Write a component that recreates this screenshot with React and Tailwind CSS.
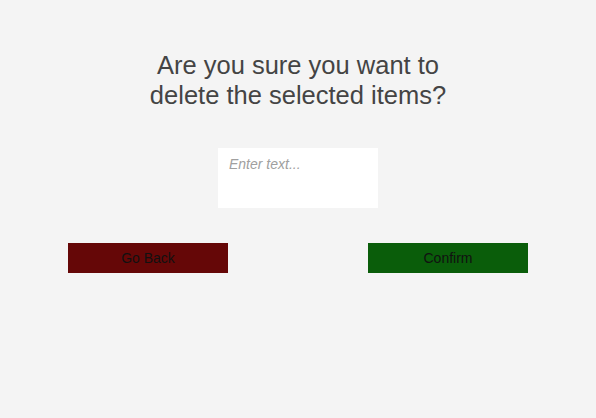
export default function App() {
  return (
    <div className="w-[596px] h-[418px] bg-[#f4f4f4] flex flex-col items-center" style={{ fontFamily: '"Liberation Sans", Arial, sans-serif' }}>
      <h1 className="mt-[50px] text-[25.5px] leading-[30px] text-[#444444] text-center font-normal">
        Are you sure you want to<br />delete the selected items?
      </h1>
      <textarea
        placeholder="Enter text..."
        className="mt-[38px] w-[160px] h-[60px] bg-white resize-none outline-none pl-[11px] pr-[10px] py-[6px] text-[14px] italic placeholder:text-[#a0a0a0] placeholder:italic"
      />
      <div className="mt-[35px] w-[460px] flex justify-between">
        <button className="w-[160px] h-[30px] bg-[#650707] text-[14px] text-[#111]">Go Back</button>
        <button className="w-[160px] h-[30px] bg-[#0a5d0a] text-[14px] text-[#111]">Confirm</button>
      </div>
    </div>
  );
}
